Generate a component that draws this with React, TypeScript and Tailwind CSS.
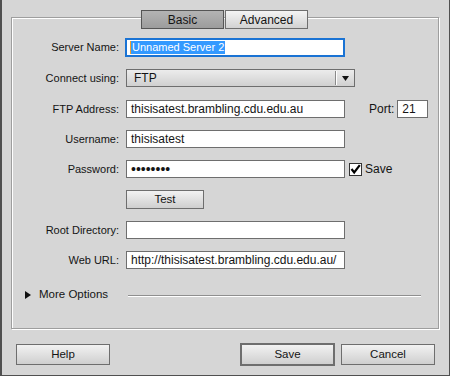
import React from 'react';

const Field: React.FC<{ value?: string; className?: string }> = ({ value = '', className = 'w-[219px]' }) => (
  <div className={`h-[18px] bg-white border border-[#6e6e6e] flex items-center pl-[4px] text-[12px] ${className}`}>
    <span className="leading-none whitespace-nowrap">{value}</span>
  </div>
);

const Label: React.FC<{ children: React.ReactNode }> = ({ children }) => (
  <div className="w-[107px] text-right whitespace-nowrap">{children}</div>
);

const Btn: React.FC<{ children: React.ReactNode; className?: string }> = ({ children, className = '' }) => (
  <div
    className={`flex items-center justify-center bg-gradient-to-b from-[#f2f2f2] to-[#cfcfcf] border border-[#6e6e6e] text-[11.5px] ${className}`}
  >
    {children}
  </div>
);

export default function App() {
  return (
    <div className="w-[450px] h-[376px] bg-[#d6d6d6] border-l-2 border-r border-b border-[#505050] flex flex-col font-['Liberation_Sans',Arial,sans-serif] text-[11px] text-[#141414] select-none">
      {/* Group box */}
      <div className="mt-[17px] ml-[9px] w-[428px] h-[312px] border border-[#9e9e9e] shadow-[inset_1px_1px_0_#fff,1px_1px_0_#fff] flex flex-col">
        {/* Tabs */}
        <div className="-mt-[8px] pl-[129px] flex gap-[1px] text-[12px]">
          <div className="w-[83px] h-[19px] flex items-center justify-center bg-gradient-to-b from-[#b4b4b4] to-[#9c9c9c] border border-[#555]">
            Basic
          </div>
          <div className="w-[83px] h-[19px] flex items-center justify-center bg-gradient-to-b from-[#f4f4f4] to-[#d2d2d2] border border-[#6e6e6e]">
            Advanced
          </div>
        </div>

        {/* Server name */}
        <div className="mt-[9px] flex items-center gap-[7px]">
          <Label>Server Name:</Label>
          <div className="-ml-[1px] w-[220px] h-[19px] bg-white border-2 border-[#1a73d4] flex items-center pl-[3px]">
            <span className="bg-[#3399ff] text-white leading-[13px] px-[1px] border-l border-[#f0a030]">Unnamed Server 2</span>
          </div>
        </div>

        {/* Connect using */}
        <div className="mt-[12px] flex items-center gap-[7px]">
          <Label>Connect using:</Label>
          <div className="w-[229px] h-[18px] bg-gradient-to-b from-[#ececec] to-[#d0d0d0] border border-[#6e6e6e] flex items-center">
            <span className="pl-[7px] flex-1 text-[12px]">FTP</span>
            <div className="w-px h-[14px] bg-[#8a8a8a] shadow-[1px_0_0_#fff]" />
            <div className="w-[18px] flex items-center justify-center">
              <svg width="7" height="5" viewBox="0 0 7 5">
                <path d="M0 0H7L3.5 5Z" fill="#111" />
              </svg>
            </div>
          </div>
        </div>

        {/* FTP address */}
        <div className="mt-[13px] flex items-center gap-[7px]">
          <Label>FTP Address:</Label>
          <Field value="thisisatest.brambling.cdu.edu.au" />
          <span className="ml-[17px] text-[12px]">Port:</span>
          <Field value="21" className="w-[31px] -ml-[4px]" />
        </div>

        {/* Username */}
        <div className="mt-[12px] flex items-center gap-[7px]">
          <Label>Username:</Label>
          <Field value="thisisatest" />
        </div>

        {/* Password */}
        <div className="mt-[12px] flex items-center gap-[7px]">
          <Label>Password:</Label>
          <div className="w-[219px] h-[18px] bg-white border border-[#6e6e6e] flex items-center pl-[4px] text-[14px] leading-none">
            ••••••••
          </div>
          <div className="-ml-[3px] w-[13px] h-[13px] bg-white border border-[#333] flex items-center justify-center">
            <svg width="11" height="11" viewBox="0 0 11 11">
              <path d="M1.5 5L4.2 8.5L9.8 1.2" stroke="#000" strokeWidth="2.2" fill="none" />
            </svg>
          </div>
          <span className="-ml-[4px] text-[12px]">Save</span>
        </div>

        {/* Test */}
        <div className="mt-[12px] pl-[114px]">
          <Btn className="w-[78px] h-[19px]">Test</Btn>
        </div>

        {/* Root directory */}
        <div className="mt-[12px] flex items-center gap-[7px]">
          <Label>Root Directory:</Label>
          <Field />
        </div>

        {/* Web URL */}
        <div className="mt-[12px] flex items-center gap-[7px]">
          <Label>Web URL:</Label>
          <Field value="http://thisisatest.brambling.cdu.edu.au/" />
        </div>

        {/* More options */}
        <div className="mt-[19px] h-[14px] flex items-center">
          <svg className="ml-[13px]" width="6" height="8" viewBox="0 0 6 8">
            <path d="M0 0L6 4L0 8Z" fill="#111" />
          </svg>
          <span className="ml-[8px] text-[11.5px]">More Options</span>
          <div className="ml-[20px] mr-[17px] flex-1 border-t border-[#8f8f8f] shadow-[0_1px_0_#fff]" />
        </div>
      </div>

      {/* Bottom buttons */}
      <div className="mt-[14px] h-[23px] flex items-center">
        <Btn className="ml-[14px] w-[94px] h-[21px]">Help</Btn>
        <Btn className="ml-[130px] w-[95px] h-[23px] border-2 border-[#4a4a4a]">Save</Btn>
        <Btn className="ml-[6px] w-[94px] h-[21px]">Cancel</Btn>
      </div>
    </div>
  );
}
